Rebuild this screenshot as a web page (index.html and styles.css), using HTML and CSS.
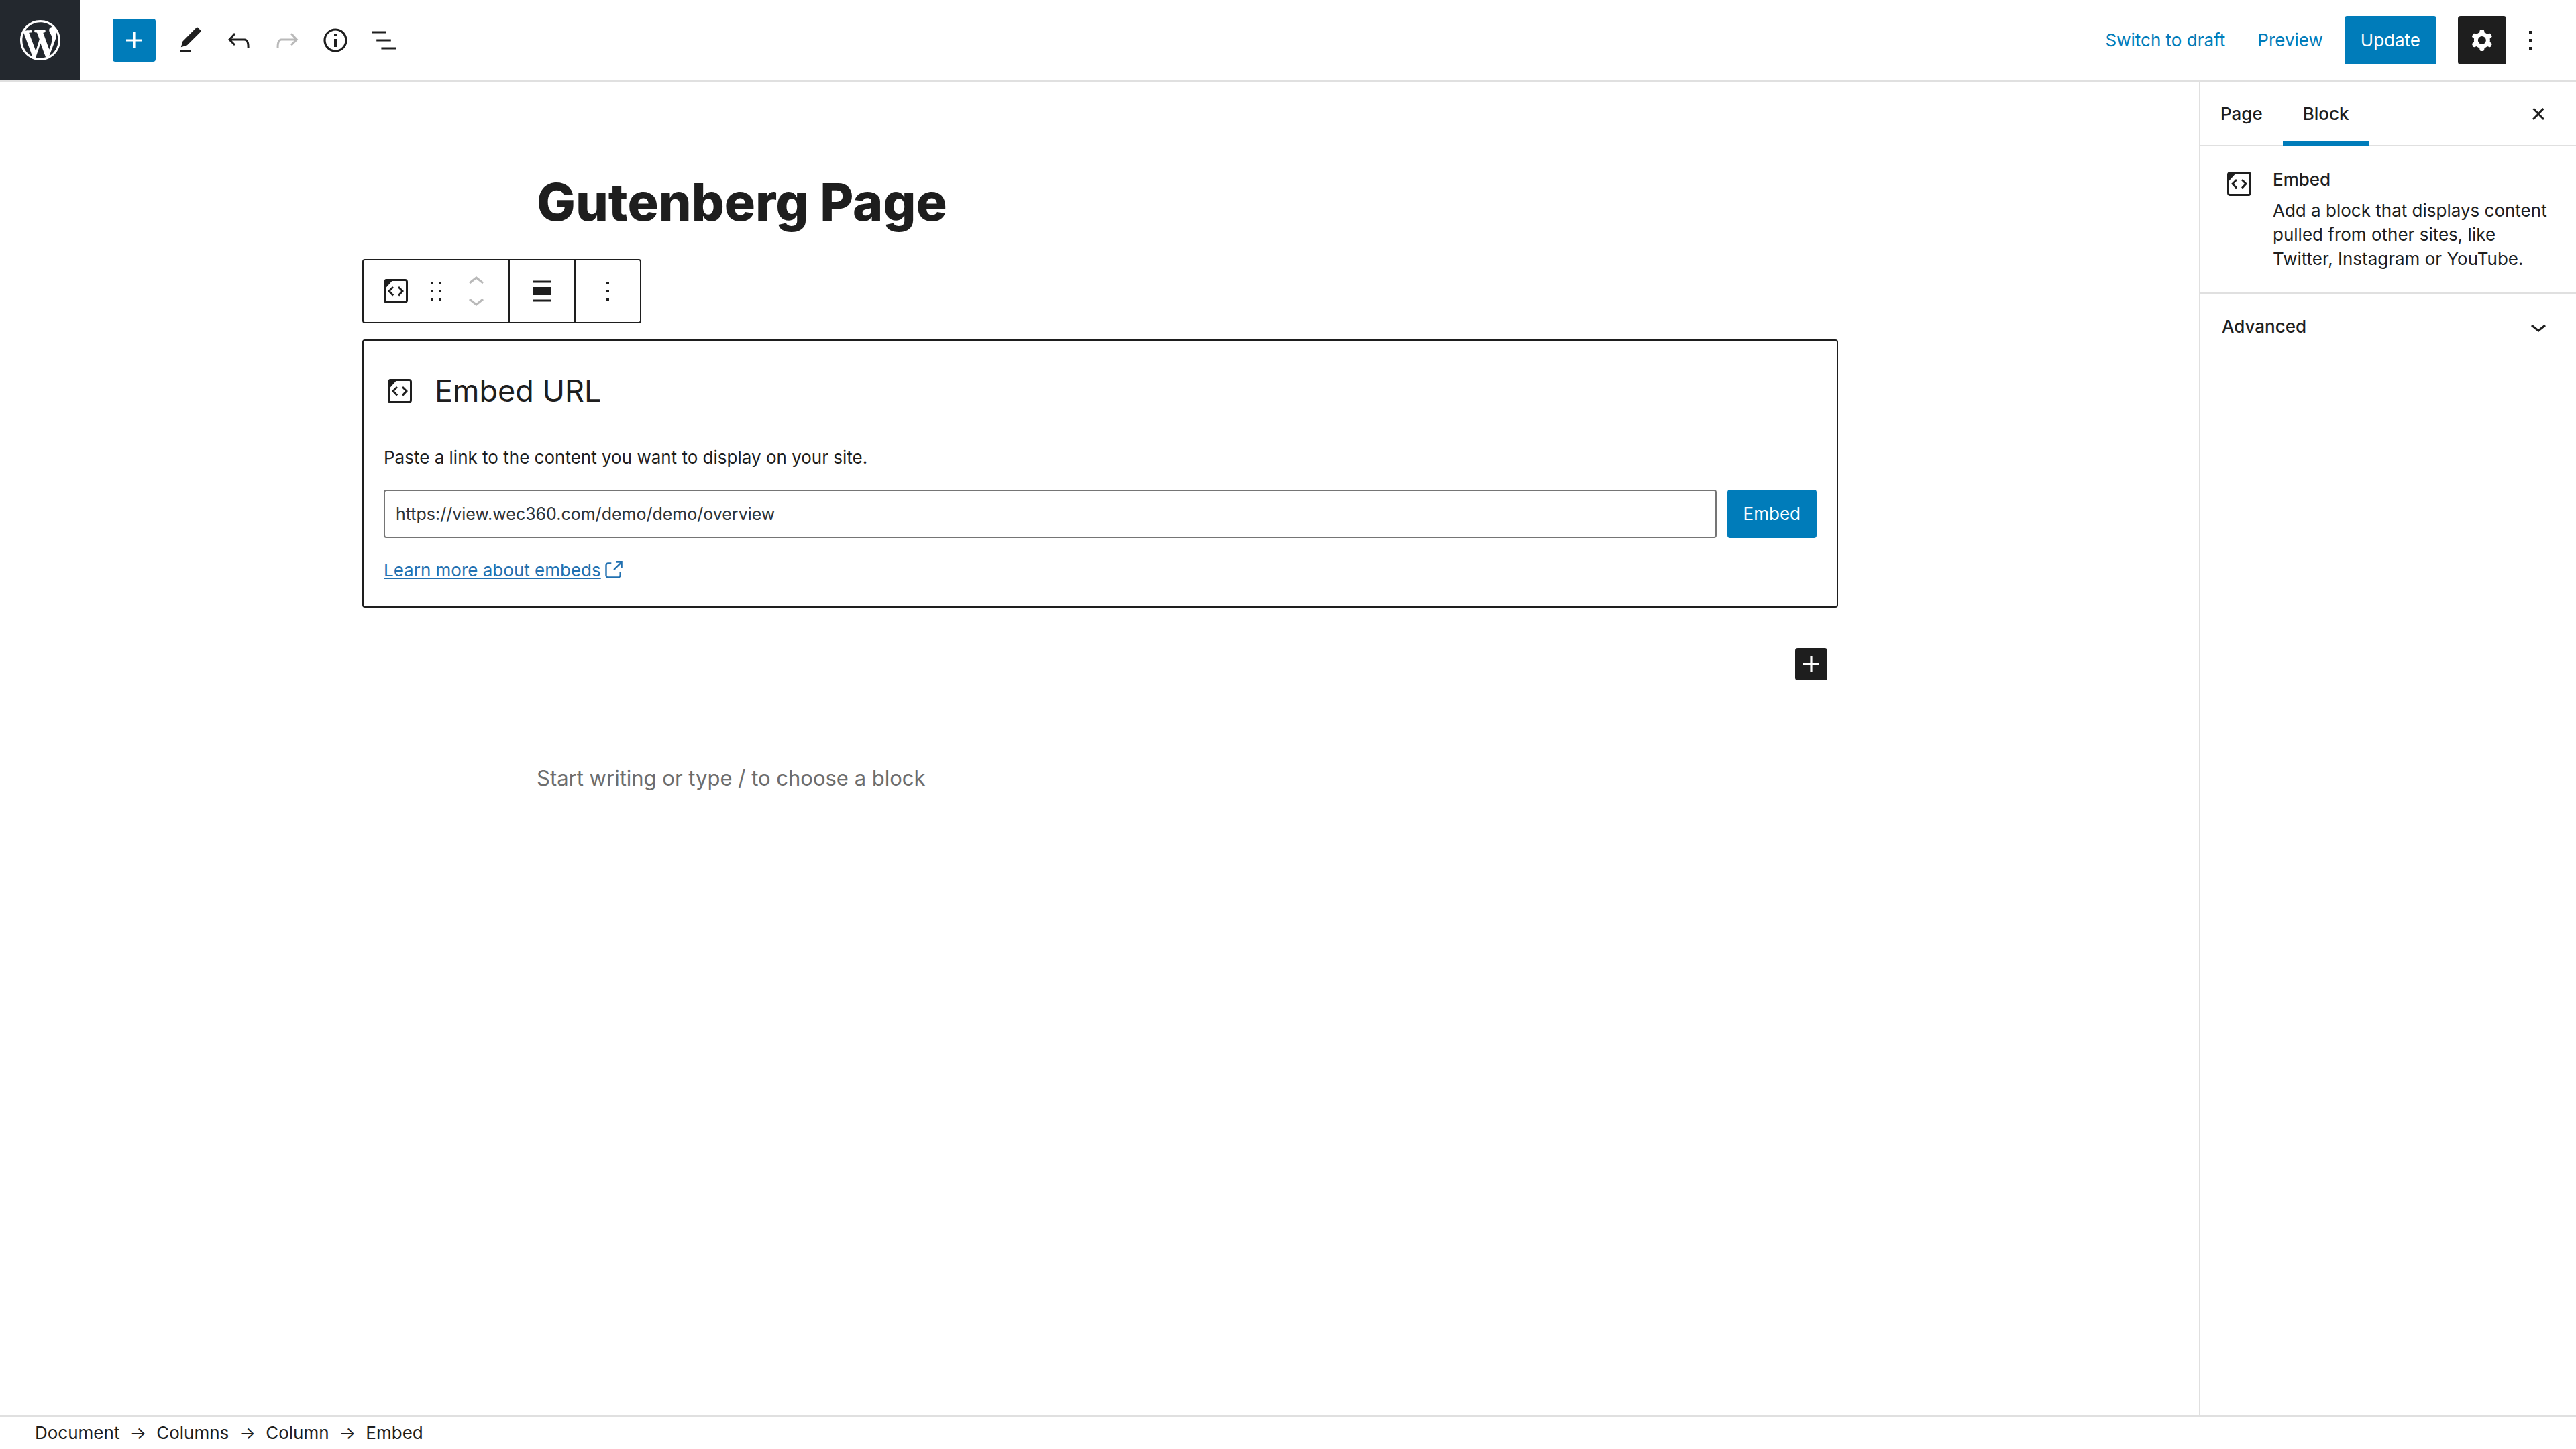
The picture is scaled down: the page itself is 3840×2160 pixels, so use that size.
FILE: index.html
```html
<!DOCTYPE html>
<html lang="en">
<head>
<meta charset="utf-8">
<meta name="viewport" content="width=device-width, initial-scale=1">
<title>Edit Page</title>
<link rel="stylesheet" href="styles.css">
</head>
<body>
<svg class="sprite" aria-hidden="true">
  <symbol id="i-plus" viewBox="0 0 24 24"><path d="M18 11.2h-5.2V6h-1.6v5.2H6v1.6h5.2V18h1.6v-5.2H18z"/></symbol>
  <symbol id="i-more" viewBox="0 0 24 24"><path d="M13 19h-2v-2h2v2zm0-6h-2v-2h2v2zm0-6h-2V5h2v2z"/></symbol>
  <symbol id="i-embed" viewBox="0 0 24 24"><path d="M19 3H5c-1.1 0-2 .9-2 2v14c0 1.1.9 2 2 2h14c1.1 0 2-.9 2-2V5c0-1.1-.9-2-2-2zm.5 16c0 .3-.2.5-.5.5H5c-.3 0-.5-.2-.5-.5V9.8l4.7-5.3H19c.3 0 .5.2.5.5v14zm-6-9.5L16 12l-2.5 2.8 1.1 1L18 12l-3.5-3.5-1 1zm-3 0l-1-1L6 12l3.5 3.8 1.1-1L8 12l2.5-2.5z"/></symbol>
  <symbol id="i-down" viewBox="0 0 24 24"><path d="M17.5 11.6L12 16l-5.5-4.4.9-1.2L12 14l4.5-3.6 1 1.2z"/></symbol>
  <symbol id="i-up" viewBox="0 0 24 24"><path d="M6.5 12.4L12 8l5.5 4.4-.9 1.2L12 10l-4.5 3.6-1-1.2z"/></symbol>
</svg>

<header class="header">
  <a class="logo" href="#" aria-label="View Pages">
    <svg class="logo-mark" viewBox="-2 -2 24 24"><path d="M20 10c0-5.51-4.49-10-10-10C4.48 0 0 4.49 0 10c0 5.52 4.48 10 10 10 5.51 0 10-4.48 10-10zM7.78 15.37L4.37 6.22c.55-.02 1.17-.08 1.17-.08.5-.06.44-1.13-.06-1.11 0 0-1.45.11-2.37.11-.18 0-.37 0-.58-.01C4.12 2.69 6.87 1.11 10 1.11c2.33 0 4.45.87 6.05 2.34-.68-.11-1.65.39-1.65 1.58 0 .74.45 1.36.9 2.1.35.61.55 1.36.55 2.46 0 1.49-1.4 5-1.4 5l-3.03-8.37c.54-.02.82-.17.82-.17.5-.05.44-1.25-.06-1.22 0 0-1.44.12-2.38.12-.87 0-2.33-.12-2.33-.12-.5-.03-.56 1.2-.06 1.22l.92.08 1.26 3.41zM17.41 10c.24-.64.74-1.87.43-4.25.7 1.29 1.05 2.71 1.05 4.25 0 3.29-1.73 6.24-4.4 7.78.97-2.59 1.94-5.2 2.92-7.78zM6.1 18.09C3.12 16.65 1.11 13.53 1.11 10c0-1.3.23-2.48.72-3.59C3.25 10.3 4.67 14.2 6.1 18.09zm4.03-6.63l2.58 6.98c-.86.29-1.76.45-2.71.45-.79 0-1.57-.11-2.29-.33.81-2.38 1.62-4.74 2.42-7.1z"/></svg>
  </a>
  <div class="tools">
    <button class="inserter" aria-label="Add block"><svg class="icon"><use href="#i-plus"/></svg></button>
    <button class="tool" aria-label="Tools"><svg class="icon" viewBox="0 0 24 24"><path d="M20.1 5.1L16.9 2 6.2 12.7l-1.3 4.4 4.5-1.3L20.1 5.1zM4 20.8h8v-1.5H4v1.5z"/></svg></button>
    <button class="tool" aria-label="Undo"><svg class="icon" viewBox="0 0 24 24"><path d="M18.3 11.7c-.6-.6-1.4-.9-2.3-.9H6.7l2.9-3.3-1.1-1-4.5 5L8.5 16l1-1-2.7-2.7H16c.5 0 .9.2 1.3.5 1 1 1 3.4 1 4.5v.3h1.5v-.2c0-1.5 0-4.3-1.5-5.7z"/></svg></button>
    <button class="tool" aria-label="Redo" disabled><svg class="icon" viewBox="0 0 24 24"><path d="M15.6 6.5l-1.1 1 2.9 3.3H8c-.9 0-1.7.3-2.3.9-1.4 1.5-1.4 4.2-1.4 5.6v.2h1.5v-.3c0-1.1 0-3.5 1-4.5.3-.3.7-.5 1.3-.5h9.2L14.5 15l1.1 1.1 4.6-4.6-4.6-5z"/></svg></button>
    <button class="tool" aria-label="Details"><svg class="icon" viewBox="0 0 24 24"><path d="M12 3.2c-4.8 0-8.8 3.9-8.8 8.8 0 4.8 3.9 8.8 8.8 8.8 4.8 0 8.8-3.9 8.8-8.8 0-4.8-4-8.8-8.8-8.8zm0 16c-4 0-7.2-3.3-7.2-7.2C4.8 8 8 4.8 12 4.8s7.2 3.3 7.2 7.2c0 4-3.2 7.2-7.2 7.2zM11 17h2v-6h-2v6zm0-8h2V7h-2v2z"/></svg></button>
    <button class="tool" aria-label="List view"><svg class="icon" viewBox="0 0 24 24"><path d="M13.8 5.2H3v1.5h10.8V5.2zm-3.6 12v1.5H21v-1.5H10.2zm7.2-6H6.6v1.5h10.8v-1.5z"/></svg></button>
  </div>
  <div class="settings">
    <button class="text-button">Switch to draft</button>
    <button class="text-button">Preview</button>
    <button class="primary update">Update</button>
    <button class="tool pressed" aria-label="Settings"><svg class="icon" viewBox="0 0 24 24"><path fill-rule="evenodd" d="M10.289 4.836A1 1 0 0111.275 4h1.306a1 1 0 01.987.836l.244 1.466c.787.26 1.503.679 2.108 1.218l1.393-.522a1 1 0 011.216.437l.653 1.13a1 1 0 01-.23 1.273l-1.148.944a6.025 6.025 0 010 2.435l1.149.946a1 1 0 01.23 1.272l-.653 1.13a1 1 0 01-1.216.437l-1.394-.522c-.605.54-1.32.958-2.108 1.218l-.244 1.466a1 1 0 01-.987.836h-1.306a1 1 0 01-.986-.836l-.244-1.466a5.995 5.995 0 01-2.108-1.218l-1.394.522a1 1 0 01-1.217-.436l-.653-1.131a1 1 0 01.23-1.272l1.149-.946a6.026 6.026 0 010-2.435l-1.148-.944a1 1 0 01-.23-1.272l.653-1.131a1 1 0 011.217-.437l1.393.522a5.994 5.994 0 012.108-1.218l.244-1.466zM14.929 12a3 3 0 11-6 0 3 3 0 016 0z"/></svg></button>
    <button class="tool" aria-label="Options"><svg class="icon"><use href="#i-more"/></svg></button>
  </div>
</header>

<div class="body">
  <main class="canvas">
    <h1 class="title">Gutenberg Page</h1>
    <div class="wide">
      <div class="toolbar" role="toolbar" aria-label="Block tools">
        <div class="group group-block">
          <button class="bar-button" aria-label="Embed"><svg class="icon"><use href="#i-embed"/></svg></button>
          <button class="bar-button" aria-label="Drag"><svg class="icon-drag" viewBox="0 0 18 18"><path d="M5 4h2V2H5v2zm6-2v2h2V2h-2zm-6 8h2V8H5v2zm6 0h2V8h-2v2zm-6 6h2v-2H5v2zm6 0h2v-2h-2v2z"/></svg></button>
          <div class="mover">
            <button class="mover-button" aria-label="Move up" disabled><svg class="icon"><use href="#i-up"/></svg></button>
            <button class="mover-button" aria-label="Move down" disabled><svg class="icon"><use href="#i-down"/></svg></button>
          </div>
        </div>
        <div class="group">
          <button class="bar-button" aria-label="Align"><svg class="icon" viewBox="0 0 24 24"><path d="M5 4.2h14v1.5H5zM5 9h14v6H5zM5 18.2h14v1.5H5z"/></svg></button>
        </div>
        <div class="group">
          <button class="bar-button" aria-label="Options"><svg class="icon"><use href="#i-more"/></svg></button>
        </div>
      </div>
      <section class="embed">
        <h2 class="embed-title"><svg class="icon"><use href="#i-embed"/></svg>Embed URL</h2>
        <label class="embed-label" for="embed-url">Paste a link to the content you want to display on your site.</label>
        <form class="embed-form">
          <input class="embed-input" id="embed-url" type="url" value="https://view.wec360.com/demo/demo/overview">
          <button class="primary" type="button">Embed</button>
        </form>
        <p class="embed-more"><a class="link" href="#">Learn more about embeds</a><svg class="icon-external" viewBox="0 0 24 24"><path d="M18.2 17c0 .7-.6 1.2-1.2 1.2H7c-.7 0-1.2-.6-1.2-1.2V7c0-.7.6-1.2 1.2-1.2h3.2V4.2H7C5.5 4.2 4.2 5.5 4.2 7v10c0 1.5 1.2 2.8 2.8 2.8h10c1.5 0 2.8-1.2 2.8-2.8v-3.6h-1.5V17zM14.9 3v1.5h3.7l-6.4 6.4 1.1 1.1 6.4-6.4v3.7h1.5V3h-6.3z"/></svg></p>
      </section>
      <div class="appender"><button class="appender-button" aria-label="Add block"><svg class="icon"><use href="#i-plus"/></svg></button></div>
    </div>
    <p class="placeholder">Start writing or type / to choose a block</p>
  </main>

  <aside class="sidebar">
    <div class="tabs">
      <button class="tab">Page</button>
      <button class="tab active">Block</button>
      <button class="tool close" aria-label="Close settings"><svg class="icon" viewBox="0 0 24 24"><path d="M13 11.9l3.3-3.4-1.1-1-3.2 3.3-3.2-3.3-1.1 1 3.3 3.4-3.5 3.6 1 1L12 13l3.5 3.5 1-1z"/></svg></button>
    </div>
    <div class="card">
      <svg class="icon"><use href="#i-embed"/></svg>
      <div class="card-text">
        <h2 class="card-title">Embed</h2>
        <p class="card-description">Add a block that displays content pulled from other sites, like Twitter, Instagram or YouTube.</p>
      </div>
    </div>
    <button class="panel" aria-expanded="false">Advanced<svg class="icon"><use href="#i-down"/></svg></button>
  </aside>
</div>

<footer class="footer">
  <ul class="crumbs">
    <li><a class="crumb" href="#">Document</a></li>
    <li><a class="crumb" href="#">Columns</a></li>
    <li><a class="crumb" href="#">Column</a></li>
    <li>Embed</li>
  </ul>
</footer>
</body>
</html>
```
FILE: styles.css
```css
* { box-sizing: border-box; }

body {
  margin: 0;
  min-height: 100vh;
  display: flex;
  flex-direction: column;
  background: #fff;
  color: #1e1e1e;
  font-family: Inter, "Liberation Sans", sans-serif;
  font-size: 26px;
  line-height: 36px;
}

h1, h2, p, ul { margin: 0; padding: 0; }

button {
  margin: 0;
  padding: 0;
  border: 0;
  background: none;
  color: inherit;
  font: inherit;
}

svg { display: block; fill: currentColor; flex: none; }

.sprite { position: absolute; width: 0; height: 0; }
.icon { width: 48px; height: 48px; }

/* Top bar */
.header {
  display: flex;
  align-items: center;
  border-bottom: 2px solid #e0e0e0;
  padding-right: 32px;
}
.logo {
  display: flex;
  align-items: center;
  justify-content: center;
  width: 120px;
  height: 120px;
  background: #23282e;
  color: #fff;
}
.logo-mark { width: 72px; height: 72px; }
.tools { display: flex; align-items: center; margin-left: 48px; }
.inserter {
  display: flex;
  align-items: center;
  justify-content: center;
  width: 64px;
  height: 64px;
  margin-right: 16px;
  border-radius: 4px;
  background: #007cba;
  color: #fff;
}
.tool {
  display: flex;
  align-items: center;
  justify-content: center;
  width: 72px;
  height: 72px;
  border-radius: 4px;
}
.tool:disabled, .mover-button:disabled { color: #b9b9b9; }
.settings { display: flex; align-items: center; margin-left: auto; }
.text-button { height: 72px; padding: 0 24px; color: #007cba; }
.primary {
  height: 72px;
  padding: 0 24px;
  border-radius: 4px;
  background: #007cba;
  color: #fff;
}
.update { margin: 0 32px 0 8px; }
.pressed { background: #1e1e1e; color: #fff; }

/* Editing area */
.body { flex: 1; display: flex; }
.canvas { flex: 1; min-width: 0; padding: 126px 0 0 2px; }
.title {
  max-width: 1680px;
  margin: 0 auto;
  font-size: 77px;
  font-weight: 800;
  line-height: 106px;
}
.wide { max-width: 2200px; margin: 32px auto 0; }

.toolbar {
  display: flex;
  width: fit-content;
  height: 96px;
  border: 2px solid #1e1e1e;
  border-radius: 4px;
}
.group { display: flex; align-items: center; padding: 0 24px; }
.group + .group { border-left: 2px solid #1e1e1e; }
.group-block { gap: 12px; }
.bar-button { display: flex; justify-content: center; width: 48px; }
.icon-drag { width: 36px; height: 36px; }
.mover { width: 48px; display: flex; flex-direction: column; }
.mover-button { display: flex; align-items: center; height: 28px; }

.embed {
  margin-top: 24px;
  padding: 30px 30px 36px;
  border: 2px solid #1e1e1e;
  border-radius: 4px;
}
.embed-title {
  display: flex;
  align-items: center;
  gap: 28px;
  height: 90px;
  font-size: 45px;
  font-weight: 400;
}
.embed-label { display: block; margin-top: 36px; }
.embed-form { display: flex; gap: 16px; margin-top: 30px; }
.embed-input {
  flex: 1;
  min-width: 0;
  height: 72px;
  padding: 0 16px;
  border: 2px solid #757575;
  border-radius: 4px;
  background: #fff;
  color: #2c3338;
  font: inherit;
  font-size: 25px;
}
.embed-more { display: flex; align-items: center; margin-top: 30px; color: #2271b1; }
.link { color: inherit; }
.icon-external { width: 36px; height: 36px; }

.appender { display: flex; justify-content: flex-end; padding: 60px 16px 0; }
.appender-button { border-radius: 4px; background: #1e1e1e; color: #fff; }

.placeholder {
  max-width: 1680px;
  margin: 118px auto 0;
  color: #6d6d6d;
  font-size: 31px;
  line-height: 56px;
}

/* Settings sidebar */
.sidebar { width: 562px; border-left: 2px solid #e0e0e0; }
.tabs { display: flex; height: 96px; border-bottom: 2px solid #e0e0e0; padding-right: 20px; }
.tab { height: 96px; padding: 0 30px; font-weight: 500; }
.active { box-shadow: inset 0 -8px #007cba; }
.close { margin: 12px 0 0 auto; }
.card { display: flex; gap: 26px; padding: 32px 26px 32px 34px; border-bottom: 2px solid #e0e0e0; }
.card-title { margin-bottom: 10px; font-size: 26px; font-weight: 500; }
.panel {
  display: flex;
  align-items: center;
  justify-content: space-between;
  width: 100%;
  height: 98px;
  padding: 0 32px;
  font-weight: 500;
}

/* Block breadcrumb */
.footer { border-top: 2px solid #e0e0e0; padding: 0 52px; }
.crumbs { display: flex; list-style: none; line-height: 48px; }
.crumbs li:not(:last-child)::after { content: "\2192"; margin: 0 15px; }
.crumb { color: inherit; text-decoration: none; }
```
